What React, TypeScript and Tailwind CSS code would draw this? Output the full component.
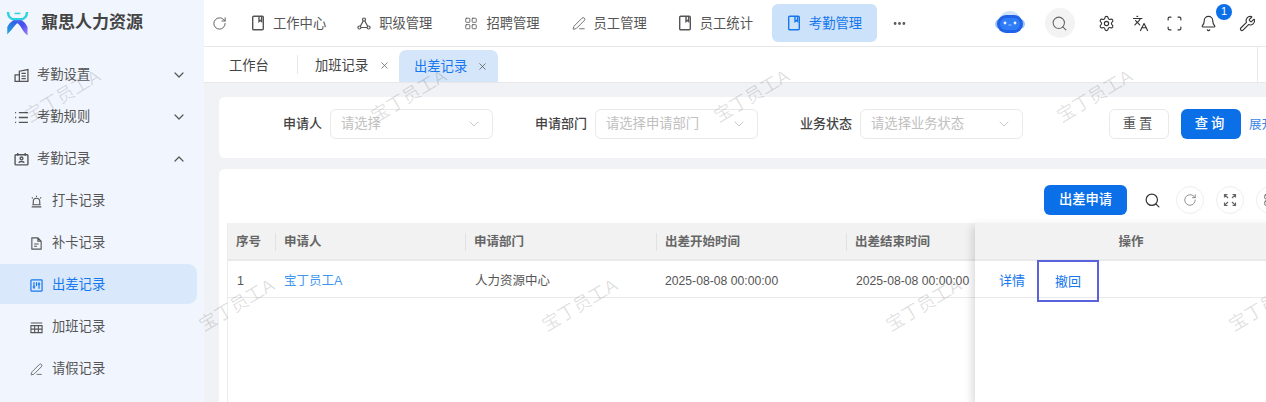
import type { ReactNode } from 'react'
import {
  Bell,
  ChevronDown,
  ChevronUp,
  Ellipsis,
  Languages,
  LayoutGrid,
  PenLine,
  RotateCw,
  Scan,
  Search,
  Settings,
  Wrench,
  X,
} from 'lucide-react'

const fontStack = "font-['Liberation_Sans','Noto_Sans_CJK_SC',sans-serif]"

function BookIcon({ className = '' }: { className?: string }) {
  return (
    <svg className={className} width="14" height="16" viewBox="0 0 14 16" fill="none" stroke="currentColor" strokeWidth="1.4">
      <rect x="1.7" y="1.2" width="10.6" height="13.6" rx="1" />
      <path d="M8 1.2v5.300l1.300-1 1.300 1V1.200" />
    </svg>
  )
}

function NodesIcon() {
  return (
    <svg width="15" height="15" viewBox="0 0 14 14" fill="none" stroke="currentColor" strokeWidth="1.2">
      <circle cx="7" cy="3" r="1.5" />
      <circle cx="2.400" cy="11" r="1.500" />
      <circle cx="11.600" cy="11" r="1.500" />
      <path d="M6.300 4.400 3.300 9.700M7.700 4.400l3 5.300M4 11h6" />
    </svg>
  )
}

function ExpandIcon() {
  return (
    <svg width="14" height="14" viewBox="0 0 14 14" fill="none" stroke="currentColor" strokeWidth="1.200">
      <path d="M1.500 4.500v-3h3M1.500 1.500l3.500 3.500M12.500 4.500v-3h-3M12.500 1.500 9 5M1.500 9.500v3h3M1.500 12.500 5 9M12.500 9.500v3h-3M12.500 12.500 9 9" />
    </svg>
  )
}

function Logo() {
  return (
    <svg width="23" height="25" viewBox="0 0 24 26" fill="none">
      <defs>
        <linearGradient id="lg1" x1="4" y1="8" x2="24" y2="26" gradientUnits="userSpaceOnUse">
          <stop offset="0" stopColor="#2a6ce8" />
          <stop offset="0.55" stopColor="#4a4ff0" />
          <stop offset="1" stopColor="#b28bf8" />
        </linearGradient>
        <linearGradient id="lg2" x1="0" y1="26" x2="20" y2="8" gradientUnits="userSpaceOnUse">
          <stop offset="0" stopColor="#23b5d8" />
          <stop offset="0.6" stopColor="#2f62e6" />
          <stop offset="1" stopColor="#6b5cf0" />
        </linearGradient>
      </defs>
      <path d="M2 1c.5 5.500 3.500 7.500 6.500 7.500h7c3 0 6-2 6.500-7.500" stroke="#2fd0e0" strokeWidth="2.600" />
      <path d="M9 2.500h6" stroke="#2fd0e0" strokeWidth="1.600" />
      <path d="M6 10c6 1 9 5 11 9 1.200 2.500 3 4.500 5.500 6.500V17c-1-3-4-7-7-7.500Z" fill="url(#lg1)" />
      <path d="M18 10c-6 1-9 5-11 8-1.500 2.400-3.500 4-5.700 6.500V17c1-3 4-7 8-7.500Z" fill="url(#lg2)" />
    </svg>
  )
}

function Robot() {
  return (
    <svg width="30" height="24" viewBox="0 0 30 24" fill="none">
      <ellipse cx="15" cy="8" rx="10" ry="8" fill="#cfe4fb" />
      <rect x="0" y="8" width="30" height="10" rx="5" fill="#9cc6f5" />
      <rect x="2" y="4" width="26" height="18" rx="9" fill="#1f62e8" />
      <rect x="5" y="7" width="20" height="12" rx="6" fill="#2f7df6" />
      <circle cx="10" cy="12" r="1.400" fill="#e8f2ff" />
      <circle cx="20" cy="12" r="1.400" fill="#e8f2ff" />
      <path d="M13.500 14h3" stroke="#bcd8ff" strokeWidth="0.800" />
    </svg>
  )
}

function NavItem({ icon, label, className = '' }: { icon: ReactNode; label: string; className?: string }) {
  return (
    <div className={`flex items-center whitespace-nowrap text-[#555] ${className}`}>
      <span className="flex w-[14px] justify-center">{icon}</span>
      <span className="ml-[8px] pt-[1px]">{label}</span>
    </div>
  )
}

function SideRow({ icon, label, open }: { icon: ReactNode; label: string; open?: boolean }) {
  return (
    <div className="flex h-[42px] items-center pl-[14px] pr-[17px] text-[#555]">
      <span className="flex w-[15px] justify-center">{icon}</span>
      <span className="ml-[8px] flex-1">{label}</span>
      {open ? <ChevronUp size={16} strokeWidth={1.800} /> : <ChevronDown size={16} strokeWidth={1.800} />}
    </div>
  )
}

function SubRow({ icon, label, active }: { icon: ReactNode; label: string; active?: boolean }) {
  return (
    <div className="flex h-[42px] items-start">
      <div className={`flex h-[40px] w-[197px] items-center rounded-r-[9px] pl-[30px] pt-[2px] ${active ? 'bg-[#d9e8fb] text-[#1677ee]' : 'text-[#555]'}`}>
        <span className="flex w-[13px] justify-center">{icon}</span>
        <span className="ml-[9px]">{label}</span>
      </div>
    </div>
  )
}

function Sidebar() {
  return (
    <aside className="w-[204px] shrink-0 bg-[#f1f6fe]">
      <div className="flex h-[46px] items-center pl-[6px]">
        <Logo />
        <span className="ml-[12px] text-[17px] font-bold text-[#444]">鼐思人力资源</span>
      </div>
      <div className="pt-[8px]">
        <SideRow
          label="考勤设置"
          icon={
            <svg width="15" height="15" viewBox="0 0 14 14" fill="none" stroke="currentColor" strokeWidth="1.200">
              <path d="M1 6.500h4v6H1zM5 12.500V3l8-1.500v11zM7 5h4M7 7.500h4M7 10h4" />
            </svg>
          }
        />
        <SideRow
          label="考勤规则"
          icon={
            <svg width="15" height="15" viewBox="0 0 14 14" fill="none" stroke="currentColor" strokeWidth="1.200">
              <path d="M4.500 2.500H13M4.500 7H13M4.500 11.500H13" />
              <path d="M1 2.500h1.500M1 7h1.500M1 11.500h1.500" strokeDasharray="1 .6" />
            </svg>
          }
        />
        <SideRow
          open
          label="考勤记录"
          icon={
            <svg width="15" height="15" viewBox="0 0 14 14" fill="none" stroke="currentColor" strokeWidth="1.300">
              <rect x="1" y="2.500" width="12" height="9.500" rx="0.800" />
              <path d="M3.500 1v2.500M10.500 1v2.500" />
              <circle cx="7" cy="6" r="1.300" />
              <path d="M4.500 10c.4-1.500 4.600-1.500 5 0" />
            </svg>
          }
        />
        <SubRow
          label="打卡记录"
          icon={
            <svg width="15" height="15" viewBox="0 0 14 14" fill="none" stroke="currentColor" strokeWidth="1.200">
              <path d="M3.500 10.500V7a3.500 3.500 0 0 1 7 0v3.500M1.800 12.800h10.400M2.500 10.500h9" />
              <path d="M7 .8v1.400M2 2.600l1 1M12 2.600l-1 1" />
            </svg>
          }
        />
        <SubRow
          label="补卡记录"
          icon={
            <svg width="15" height="15" viewBox="0 0 14 14" fill="none" stroke="currentColor" strokeWidth="1.200">
              <path d="M2 1h6.500l3.500 3.500V13H2zM8.500 1v3.500H12M4.500 7.500h4.800M4.500 10h3" />
            </svg>
          }
        />
        <SubRow
          active
          label="出差记录"
          icon={
            <svg width="15" height="15" viewBox="0 0 14 14" fill="none" stroke="currentColor" strokeWidth="1.300">
              <rect x="1" y="1" width="12" height="12" rx="0.600" />
              <path d="M4.300 3.500v7M9.700 3.500v7M3 8.500h2.600M8.400 5.500H11M7 3.500v4" />
            </svg>
          }
        />
        <SubRow
          label="加班记录"
          icon={
            <svg width="15" height="15" viewBox="0 0 14 14" fill="none" stroke="currentColor" strokeWidth="1.200">
              <path d="M.8 2.200h12.400M1 5h12v7.500H1zM1 8.800h12M5 5v7.500M9 5v7.500" />
            </svg>
          }
        />
        <SubRow label="请假记录" icon={<PenLine size={15} strokeWidth={1.500} />} />
      </div>
    </aside>
  )
}

function TopBar() {
  return (
    <header className="flex h-[47px] items-center border-b border-[#e8e8e8] bg-white">
      <RotateCw size={15} strokeWidth={1.500} className="ml-[8px] text-[#555]" />
      <NavItem className="ml-[24px]" icon={<BookIcon />} label="工作中心" />
      <NavItem className="ml-[31px]" icon={<NodesIcon />} label="职级管理" />
      <NavItem className="ml-[32px]" icon={<LayoutGrid size={15} strokeWidth={1.400} />} label="招聘管理" />
      <NavItem className="ml-[32px]" icon={<PenLine size={15} strokeWidth={1.400} />} label="员工管理" />
      <NavItem className="ml-[31px]" icon={<BookIcon />} label="员工统计" />
      <div className="ml-[19px] flex h-[38px] w-[105px] items-center justify-center rounded-[6px] bg-[#cce1fa] text-[#1677ee]">
        <BookIcon />
        <span className="ml-[8px] pt-[1px]">考勤管理</span>
      </div>
      <Ellipsis size={15} strokeWidth={2.500} className="ml-[15px] text-[#555]" />
      <div className="ml-[88px]"><Robot /></div>
      <div className="ml-[20px] flex h-[30px] w-[30px] items-center justify-center rounded-full bg-[#f3f3f3]">
        <Search size={17} strokeWidth={1.500} className="text-[#666]" />
      </div>
      <Settings size={17} strokeWidth={1.600} className="ml-[23px] text-[#333]" />
      <Languages size={17} strokeWidth={1.600} className="ml-[17px] text-[#333]" />
      <Scan size={17} strokeWidth={1.600} className="ml-[17px] text-[#333]" />
      <div className="relative ml-[17px]">
        <Bell size={17} strokeWidth={1.600} className="text-[#333]" />
        <span className="absolute left-[16px] top-[-11px] flex h-[16px] w-[16px] items-center justify-center rounded-full bg-[#0b6fe8] text-[11px] text-white">1</span>
      </div>
      <Wrench size={17} strokeWidth={1.600} className="ml-[22px] text-[#333]" />
    </header>
  )
}

function TabBar() {
  return (
    <div className="flex h-[36px] items-end border-b border-[#e8e8e8] bg-white">
      <div className="flex h-[35px] w-[93px] shrink-0 items-center pl-[25px] pt-[2px] text-[#444]">工作台</div>
      <div className="mb-[8px] h-[19px] w-px shrink-0 bg-[#e8e8e8]" />
      <div className="flex h-[35px] w-[101px] shrink-0 items-center pl-[17px] pt-[2px] text-[#444]">
        <span>加班记录</span>
        <X size={11} strokeWidth={1.500} className="ml-[11px] text-[#555]" />
      </div>
      <div className="flex h-[32px] w-[99px] shrink-0 items-center rounded-t-[7px] bg-[#d5e6fb] pl-[15px] pt-[1px] text-[#1677ee]">
        <span>出差记录</span>
        <X size={11} strokeWidth={1.500} className="ml-[10px] text-[#444]" />
      </div>
      <div className="flex-1" />
      <div className="h-[35px] w-px bg-[#e8e8e8]" />
      <div className="w-[8px]" />
    </div>
  )
}

function FilterField({ label, hint, className = '' }: { label: string; hint: string; className?: string }) {
  return (
    <div className={`flex items-center ${className}`}>
      <span className="whitespace-nowrap text-[13px] font-medium text-[#444]">{label}</span>
      <div className="ml-[8px] flex h-[30px] w-[163px] items-center rounded-[6px] border border-[#e9e9e9] pl-[10px] pr-[10px] text-[#c0c0c0]">
        <span className="flex-1 whitespace-nowrap">{hint}</span>
        <ChevronDown size={16} strokeWidth={1} className="text-[#aaa]" />
      </div>
    </div>
  )
}

function FilterCard() {
  return (
    <section className="flex h-[61px] w-[1100px] items-start rounded-l-[6px] bg-white pl-[64px] pt-[12px]">
      <FilterField label="申请人" hint="请选择" />
      <FilterField className="ml-[42px]" label="申请部门" hint="请选择申请部门" />
      <FilterField className="ml-[42px]" label="业务状态" hint="请选择业务状态" />
      <button className="ml-[86px] h-[30px] w-[60px] rounded-[6px] border border-[#e9e9e9] tracking-[3px] text-[#555]">重置</button>
      <button className="ml-[12px] h-[30px] w-[60px] rounded-[6px] bg-[#0b6fe8] font-medium tracking-[3px] text-white">查询</button>
      <span className="ml-[8px] mt-[7px] whitespace-nowrap text-[12.5px] text-[#3b85e8]">展开</span>
    </section>
  )
}

function HeadCell({ label, className }: { label: string; className: string }) {
  return (
    <div className={`relative flex h-full shrink-0 items-center pl-[9px] font-bold text-[#666] ${className}`}>
      <span className="absolute left-0 top-[10px] h-[18px] w-px bg-[#e2e2e2]" />
      <span className="pt-[2px]">{label}</span>
    </div>
  )
}

function ToolCircle({ children }: { children: ReactNode }) {
  return (
    <div className="flex h-[28px] w-[28px] shrink-0 items-center justify-center rounded-full border border-[#eeeeee] text-[#666]">
      {children}
    </div>
  )
}

function TableCard() {
  return (
    <section className="mt-[11px] h-[240px] w-[1100px] rounded-l-[6px] bg-white pl-[8px]">
      <div className="flex h-[54px] items-start pl-[817px] pt-[16px]">
        <button className="h-[30px] w-[83px] rounded-[6px] bg-[#0b6fe8] font-medium text-white">出差申请</button>
        <Search size={17} strokeWidth={1.700} className="ml-[17px] mt-[7px] text-[#333]" />
        <div className="ml-[15px] mt-[1px]"><ToolCircle><RotateCw size={14} strokeWidth={1.200} /></ToolCircle></div>
        <div className="ml-[12px] mt-[1px]"><ToolCircle><ExpandIcon /></ToolCircle></div>
        <div className="ml-[12px] mt-[1px]"><ToolCircle><LayoutGrid size={14} strokeWidth={1.500} /></ToolCircle></div>
      </div>
      <div className="flex h-[186px] border-l border-[#ececec] text-[12.5px]">
        <div className="w-[747px] shrink-0 overflow-hidden">
          <div className="flex h-[38px] items-center border-b-2 border-[#e9e9e9] bg-[#f2f2f2] text-[#666]">
            <div className="flex h-full w-[47px] shrink-0 items-center pl-[8px] pt-[2px] font-bold">序号</div>
            <HeadCell className="w-[190px]" label="申请人" />
            <HeadCell className="w-[191px]" label="申请部门" />
            <HeadCell className="w-[190px]" label="出差开始时间" />
            <HeadCell className="w-[190px]" label="出差结束时间" />
          </div>
          <div className="flex h-[37px] items-center border-b border-[#e9e9e9] text-[#555]">
            <div className="w-[47px] shrink-0 pl-[9px] pt-[4px]">1</div>
            <div className="w-[190px] shrink-0 pl-[9px] pt-[4px] text-[#3f97f0]">宝丁员工A</div>
            <div className="w-[191px] shrink-0 pl-[10px] pt-[4px]">人力资源中心</div>
            <div className="w-[190px] shrink-0 whitespace-nowrap pl-[9px] pt-[4px] text-[12.2px]">2025-08-08 00:00:00</div>
            <div className="w-[129px] shrink-0 whitespace-nowrap pl-[10px] pt-[4px] text-[12.2px]">2025-08-08 00:00:00</div>
          </div>
        </div>
        <div className="relative w-[312px] shrink-0 bg-white shadow-[-6px_0_8px_-3px_rgba(0,0,0,0.14)]">
          <div className="flex h-[38px] items-center justify-center border-b-2 border-[#e9e9e9] bg-[#f2f2f2] pt-[2px] font-bold text-[#666]">操作</div>
          <div className="flex h-[37px] items-center border-b border-[#e9e9e9] text-[13px] text-[#1677ee]">
            <span className="ml-[24px] pt-[4px]">详情</span>
            <span className="relative ml-[12px] mt-[3px] flex h-[42px] w-[62px] items-center justify-center border-2 border-[#5a62dc] pt-[2px]">撤回</span>
          </div>
        </div>
      </div>
    </section>
  )
}

const marks = [
  'left-[21px] top-[83px]',
  'left-[367px] top-[83px]',
  'left-[710px] top-[83px]',
  'left-[1053px] top-[83px]',
  'left-[195px] top-[292px]',
  'left-[538px] top-[292px]',
  'left-[882px] top-[292px]',
  'left-[1225px] top-[292px]',
]

export default function App() {
  return (
    <div className={`relative flex h-[402px] w-[1266px] overflow-hidden bg-white text-[13.3px] ${fontStack}`}>
      <Sidebar />
      <main className="min-w-0 flex-1 overflow-hidden bg-[#f0f2f5]">
        <TopBar />
        <TabBar />
        <div className="pl-[15px] pt-[14px]">
          <FilterCard />
          <TableCard />
        </div>
      </main>
      {marks.map((pos) => (
        <span
          key={pos}
          className={`pointer-events-none absolute -rotate-[31deg] whitespace-nowrap text-[18px] text-black/[0.13] ${pos}`}
        >
          宝丁员工A
        </span>
      ))}
    </div>
  )
}
